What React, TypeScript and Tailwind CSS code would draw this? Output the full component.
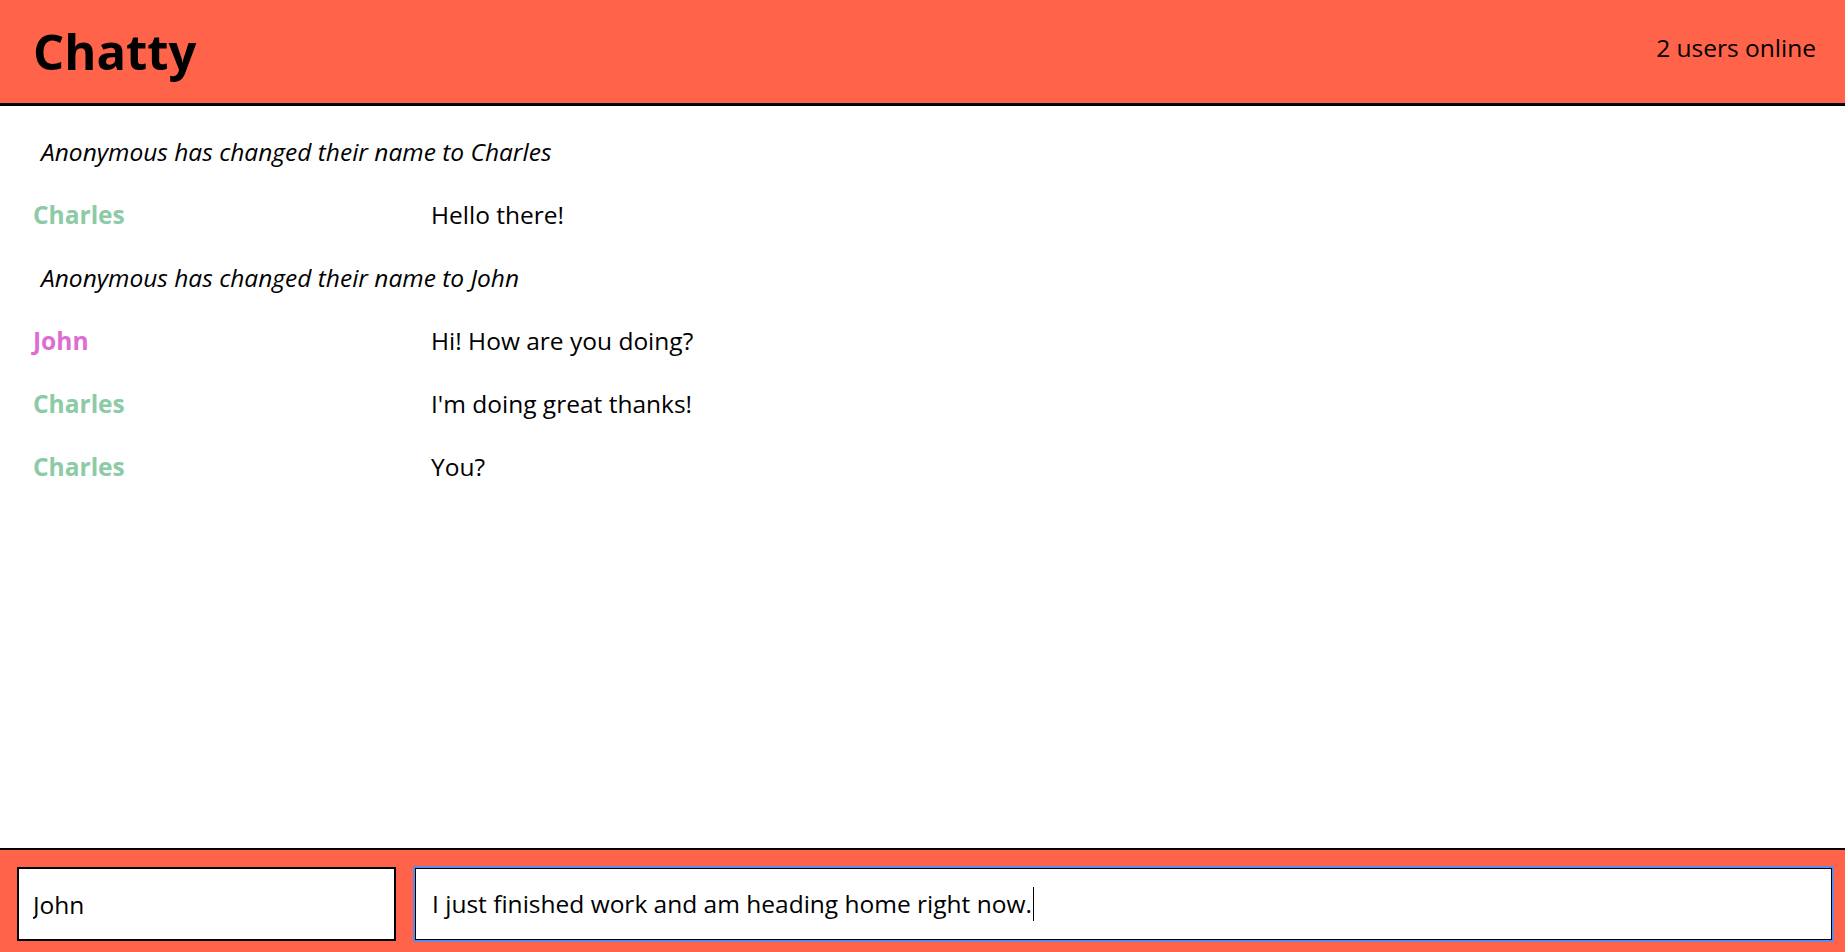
import { useState } from "react";

type ChatItem =
  | { kind: "notice"; text: string }
  | { kind: "message"; user: string; color: string; text: string };

const items: ChatItem[] = [
  { kind: "notice", text: "Anonymous has changed their name to Charles" },
  { kind: "message", user: "Charles", color: "text-[#8ccba6]", text: "Hello there!" },
  { kind: "notice", text: "Anonymous has changed their name to John" },
  { kind: "message", user: "John", color: "text-[#dc6dd2]", text: "Hi! How are you doing?" },
  { kind: "message", user: "Charles", color: "text-[#8ccba6]", text: "I'm doing great thanks!" },
  { kind: "message", user: "Charles", color: "text-[#8ccba6]", text: "You?" },
];

export default function App() {
  const [name, setName] = useState("John");
  const draft = "I just finished work and am heading home right now.";

  return (
    <div className="h-screen w-full flex flex-col bg-white text-black font-['Open_Sans',sans-serif]">
      {/* Top bar */}
      <nav className="h-[106px] flex-shrink-0 flex items-center justify-between bg-[#ff6349] border-b-[3px] border-black pl-[33px] pr-[29px]">
        <h1 className="text-[49px] font-bold leading-normal">Chatty</h1>
        <span className="text-[24.5px] leading-normal mb-[7px]">2 users online</span>
      </nav>

      {/* Message list */}
      <main className="flex-1 overflow-y-auto pt-[14px] px-[33px]">
        {items.map((item, index) =>
          item.kind === "notice" ? (
            <div key={index} className="py-[15px] pl-[8px] text-[24.5px] leading-[33px] italic">
              {item.text}
            </div>
          ) : (
            <div key={index} className="flex py-[15px] text-[24.5px] leading-[33px]">
              <span className={`w-[398px] flex-shrink-0 font-bold ${item.color}`}>{item.user}</span>
              <span>{item.text}</span>
            </div>
          )
        )}
      </main>

      {/* Compose bar */}
      <footer className="h-[104px] flex-shrink-0 flex items-start gap-[19px] bg-[#ff6349] border-t-2 border-black pt-[17px] pl-[17px] pr-[13px]">
        <input
          value={name}
          onChange={(e) => setName(e.target.value)}
          className="w-[379px] h-[74px] flex-shrink-0 bg-white border-2 border-black px-[14px] text-[24.5px] outline-none"
        />
        {/* focused message box, drawn with its caret */}
        <div
          role="textbox"
          className="flex-1 h-[72px] mt-[1px] flex items-center bg-white border border-black px-[16px] text-[24.5px] outline-2 outline-solid outline-[#5b8de8]"
        >
          <span>{draft}</span>
          <span className="inline-block w-px h-[34px] bg-black ml-[1px]" />
        </div>
      </footer>
    </div>
  );
}
